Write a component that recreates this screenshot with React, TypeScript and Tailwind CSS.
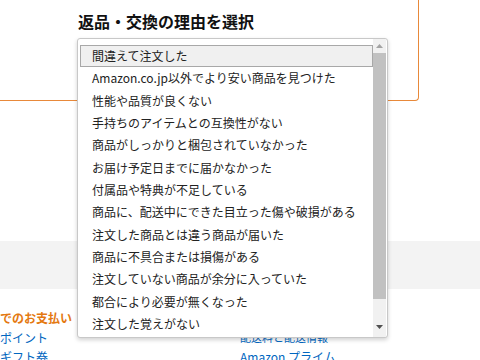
const reasons = [
  "間違えて注文した",
  "Amazon.co.jp以外でより安い商品を見つけた",
  "性能や品質が良くない",
  "手持ちのアイテムとの互換性がない",
  "商品がしっかりと梱包されていなかった",
  "お届け予定日までに届かなかった",
  "付属品や特典が不足している",
  "商品に、配送中にできた目立った傷や破損がある",
  "注文した商品とは違う商品が届いた",
  "商品に不具合または損傷がある",
  "注文していない商品が余分に入っていた",
  "都合により必要が無くなった",
  "注文した覚えがない",
];

function ReasonList() {
  return (
    <div className="absolute left-[77px] top-[38px] w-[311px] h-[300px] flex bg-white border border-[#c8c8c8] rounded-[3px] shadow-[0_2px_4px_rgba(0,0,0,0.18)]">
      <div className="flex-1 pt-[6px] pl-[2px]">
        {reasons.map((r, i) => (
          <div
            key={r}
            className={
              i === 0
                ? "h-[22.33px] flex items-center pl-[11px] bg-[#f0f0f0] border border-[#a8a8a8] text-[12px] text-[#222]"
                : "h-[22.33px] flex items-center pl-[12px] text-[12px] text-[#222]"
            }
          >
            {r}
          </div>
        ))}
      </div>
      <div className="w-[13px] mr-[1px] flex flex-col bg-[#f1f1f1]">
        <div className="h-[14px] flex items-center justify-center">
          <svg width="7" height="4" viewBox="0 0 7 4"><path d="M0 4 L3.5 0 L7 4 Z" fill="#a3a3a3" /></svg>
        </div>
        <div className="h-[246px] bg-[#c1c1c1]" />
        <div className="flex-1 flex items-end justify-center pb-[8px]">
          <svg width="7" height="4" viewBox="0 0 7 4"><path d="M0 0 L3.5 4 L7 0 Z" fill="#505050" /></svg>
        </div>
      </div>
    </div>
  );
}

export default function App() {
  return (
    <div className="relative w-[480px] h-[360px] overflow-hidden bg-white font-['Noto_Sans_CJK_JP',sans-serif]">
      <div className="-ml-[20px] -mt-[20px] w-[439px] h-[121px] border-r border-b border-[#e8893a] rounded-br-[4px] pl-[98px] pt-[29px]">
        <h2 className="text-[16px] font-bold text-[#111] leading-[24px]">返品・交換の理由を選択</h2>
      </div>
      <div className="h-[140px]" />
      <div className="h-[48px] bg-[#f3f3f3]" />
      <div className="flex pt-[19px]">
        <div className="w-[240px] flex flex-col text-[12px] leading-[19.5px]">
          <span className="font-bold text-[#e47911]">でのお支払い</span>
          <span className="text-[#0066c0]">ポイント</span>
          <span className="text-[#0066c0]">ギフト券</span>
        </div>
        <div className="flex flex-col text-[12px] leading-[19.5px]">
          <span className="font-bold text-[#e47911]">ヘルプとガイド</span>
          <span className="text-[11px] text-[#0066c0]">配送料と配送情報</span>
          <span className="text-[#0066c0]">Amazon プライム</span>
        </div>
      </div>
      <ReasonList />
    </div>
  );
}
